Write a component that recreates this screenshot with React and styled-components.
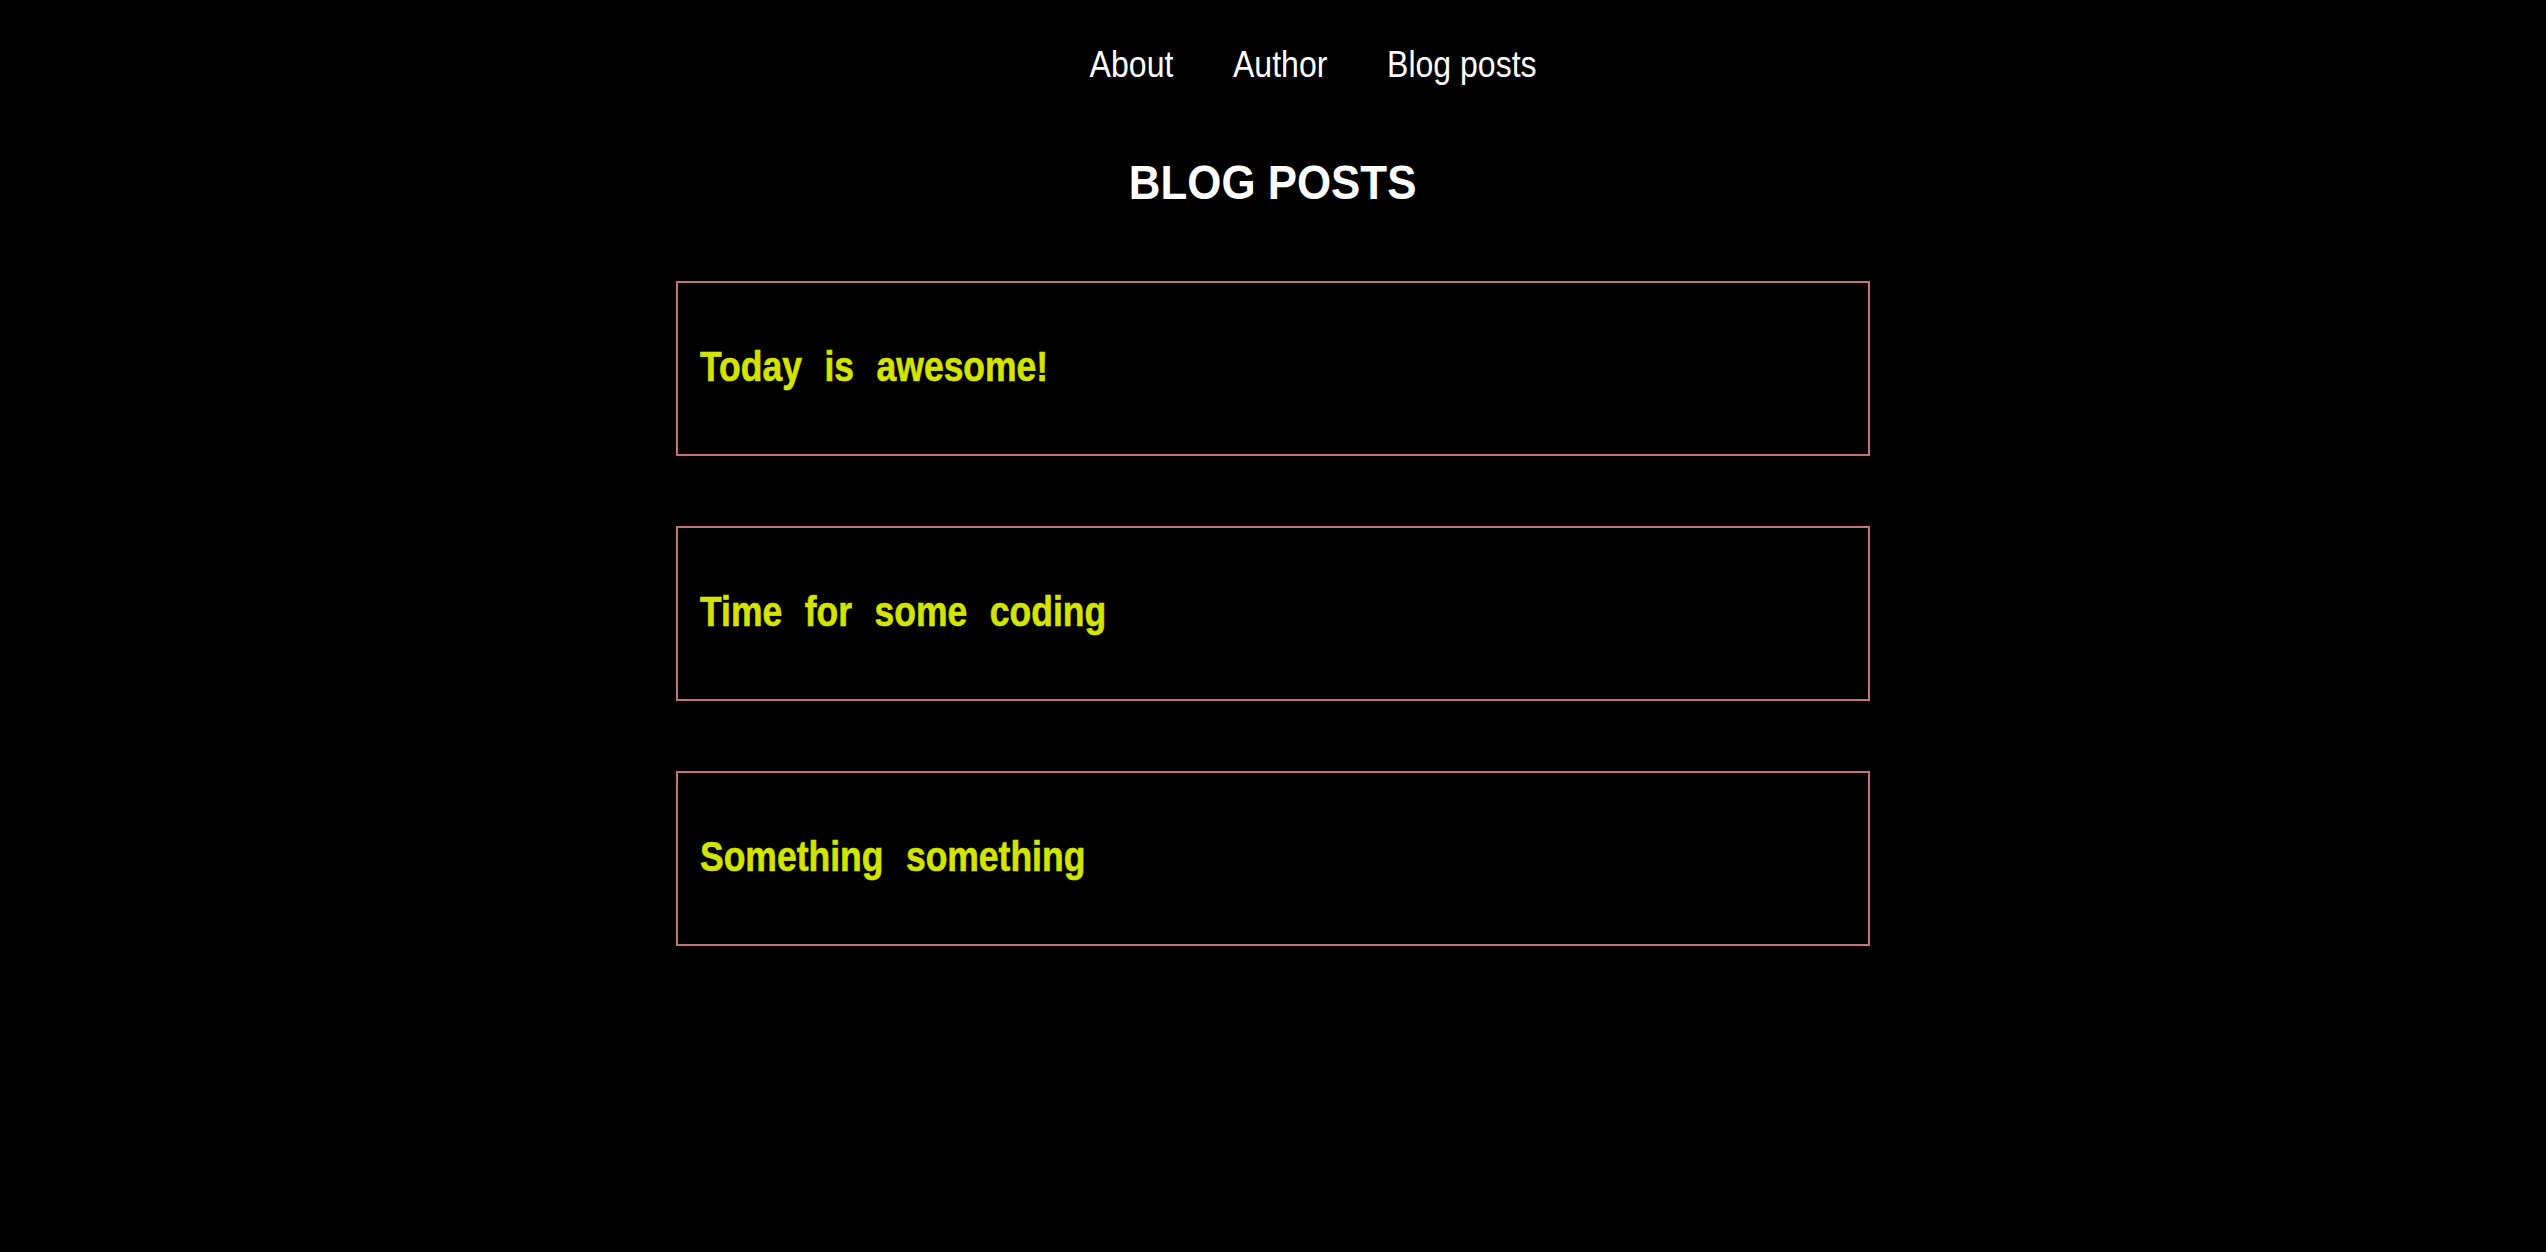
import React from "react";
import styled, { createGlobalStyle } from "styled-components";

const GlobalStyle = createGlobalStyle`
  html, body {
    margin: 0;
    padding: 0;
    background: #000;
    min-height: 100%;
  }
  body {
    font-family: "Liberation Sans", Arial, sans-serif;
    color: #fff;
  }
`;

const Page = styled.div`
  min-height: 1252px;
  background: #000;
  display: flex;
  flex-direction: column;
  align-items: center;
`;

// the original font is a narrow Arial, squeeze the text to match
const Nav = styled.nav`
  align-self: stretch;
  display: flex;
  justify-content: center;
  padding: 44px 0 0 81px;
`;

const NavList = styled.ul`
  list-style: none;
  margin: 0;
  padding: 0;
  display: flex;
  gap: 67px;
  transform: scaleX(0.89);
`;

const NavItem = styled.li`
  font-size: 36px;
  line-height: 42px;
  color: #fff;
  cursor: pointer;
`;

const Title = styled.h1`
  margin: 68px 0 0;
  font-size: 49px;
  line-height: 56px;
  font-weight: 700;
  color: #fff;
  transform: scaleX(0.895);
`;

const PostList = styled.div`
  margin-top: 71px;
  width: 1194px;
  display: flex;
  flex-direction: column;
  gap: 70px;
`;

const Card = styled.div`
  box-sizing: border-box;
  height: 175px;
  border: 2px solid #c47272;
  padding: 0 22px;
  display: flex;
  align-items: center;
`;

const PostTitle = styled.h2`
  margin: 0 0 4px;
  font-size: 42px;
  font-weight: 700;
  word-spacing: 15px;
  color: #d4e400;
  transform: scaleX(0.845);
  transform-origin: left center;
  white-space: nowrap;
  -webkit-text-stroke: 0.6px #d4e400;
`;

const posts = ["Today is awesome!", "Time for some coding", "Something something"];

const App = () => {
  return (
    <>
      <GlobalStyle />
      <Page>
        <Nav>
          <NavList>
            <NavItem>About</NavItem>
            <NavItem>Author</NavItem>
            <NavItem>Blog posts</NavItem>
          </NavList>
        </Nav>
        <Title>BLOG POSTS</Title>
        <PostList>
          {posts.map((p) => (
            <Card key={p}>
              <PostTitle>{p}</PostTitle>
            </Card>
          ))}
        </PostList>
      </Page>
    </>
  );
};

export default App;
